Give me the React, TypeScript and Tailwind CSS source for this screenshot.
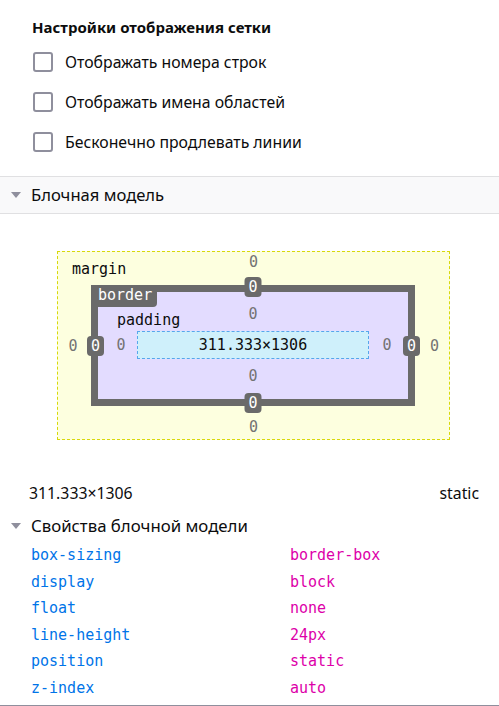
import React from "react";

const ui = { fontFamily: '"Noto Sans", "Open Sans", sans-serif' };
const mono = { fontFamily: '"DejaVu Sans Mono", "Liberation Mono", monospace' };

const Caret = () => (
    <svg width="10" height="6" viewBox="0 0 10 6" className="shrink-0">
        <path d="M0 0 H10 L5 6 Z" fill="#8f8f9d" />
    </svg>
);

const Badge = ({ className }: { className: string }) => (
    <div
        className={`absolute w-[17px] h-[20px] rounded-[4px] bg-[#6a6a6a] text-white text-[15px] leading-[20px] text-center ${className}`}
        style={mono}
    >
        0
    </div>
);

const options = [
    "Отображать номера строк",
    "Отображать имена областей",
    "Бесконечно продлевать линии",
];

const props = [
    ["box-sizing", "border-box"],
    ["display", "block"],
    ["float", "none"],
    ["line-height", "24px"],
    ["position", "static"],
    ["z-index", "auto"],
];

export default function App() {
    return (
        <div className="w-[499px] h-[706px] overflow-hidden bg-white text-[#0c0c0d] flex flex-col" style={ui}>
            {/* grid settings */}
            <div className="pt-[17px] pl-[32px] pb-[14px]">
                <h2 className="text-[15px] leading-[20px] font-bold">Настройки отображения сетки</h2>
                <ul className="mt-[5px]">
                    {options.map((o) => (
                        <li key={o} className="h-[40px] flex items-center gap-[12px] pl-[1px]">
                            <span className="w-[20px] h-[20px] rounded-[3px] border-2 border-[#8f8f9d] bg-white" />
                            <span className="text-[15.8px] leading-[20px]">{o}</span>
                        </li>
                    ))}
                </ul>
            </div>

            {/* box model header */}
            <div className="h-[38px] border-y border-[#e0e0e2] bg-[#f9f9fa] flex items-center gap-[10px] pl-[11px]">
                <Caret />
                <span className="text-[16.6px] leading-[20px]">Блочная модель</span>
            </div>

            {/* box model diagram */}
            <div className="mt-[37px] ml-[57px] w-[393px] h-[189px] border border-dashed border-[#d8d80a] bg-[#fdffdf] relative text-[15px] leading-[20px]" style={mono}>
                <span className="absolute left-[14px] top-[7px]">margin</span>
                <div className="grid grid-cols-[33px_324px_33px] grid-rows-[33px_121px_32px] text-[#737373]">
                    <div />
                    <div className="text-center pl-[1px]">0</div>
                    <div />
                    <div className="flex items-center justify-center pr-[3px]">0</div>

                    {/* border box */}
                    <div className="border-[7px] border-[#6a6a6a] bg-[#e3dcff] relative">
                        <div className="absolute left-0 top-[-7px] h-[22px] pr-[5px] rounded-br-[4px] bg-[#6a6a6a] text-white leading-[20px]">
                            border
                        </div>
                        <span className="absolute left-[19px] top-[18px] text-[#0c0c0d]">padding</span>
                        <Badge className="left-1/2 -translate-x-1/2 top-[-15px]" />
                        <Badge className="left-1/2 -translate-x-1/2 bottom-[-14px]" />
                        <Badge className="left-[-11px] top-1/2 -translate-y-1/2" />
                        <Badge className="right-[-12px] top-1/2 -translate-y-1/2" />

                        <div className="grid grid-cols-[39px_232px_39px] grid-rows-[39px_28px_40px]">
                            <div />
                            <div className="text-center pt-[12px]">0</div>
                            <div />
                            <div className="flex items-center justify-center pl-[7px]">0</div>
                            <div className="border border-dashed border-[#57a6ec] bg-[#cff0fb] flex items-center justify-center text-[#0c0c0d]">
                                311.333×1306
                            </div>
                            <div className="flex items-center justify-center pr-[3px]">0</div>
                            <div />
                            <div className="text-center pt-[7px]">0</div>
                            <div />
                        </div>
                    </div>

                    <div className="flex items-center justify-center pl-[6px]">0</div>
                    <div />
                    <div className="flex items-end justify-center pl-[1px] pb-[1px]">0</div>
                    <div />
                </div>
            </div>

            {/* dimensions */}
            <div className="mt-[42px] h-[24px] flex items-center justify-between pl-[29px] pr-[20px] text-[15.8px]">
                <span>311.333×1306</span>
                <span>static</span>
            </div>

            {/* box model properties */}
            <div className="mt-[8px] h-[24px] flex items-center gap-[10px] pl-[11px]">
                <Caret />
                <span className="text-[16.8px] leading-[20px]">Свойства блочной модели</span>
            </div>
            <ul className="mt-[4px] pl-[31px] text-[15px]" style={mono}>
                {props.map(([k, v]) => (
                    <li key={k} className="h-[26.5px] grid grid-cols-[259px_1fr] items-center">
                        <span className="text-[#0074e8]">{k}</span>
                        <span className="text-[#dd00a9]">{v}</span>
                    </li>
                ))}
            </ul>
            <div className="mt-auto h-[1px] bg-[#8f8f9d]" />
        </div>
    );
}
